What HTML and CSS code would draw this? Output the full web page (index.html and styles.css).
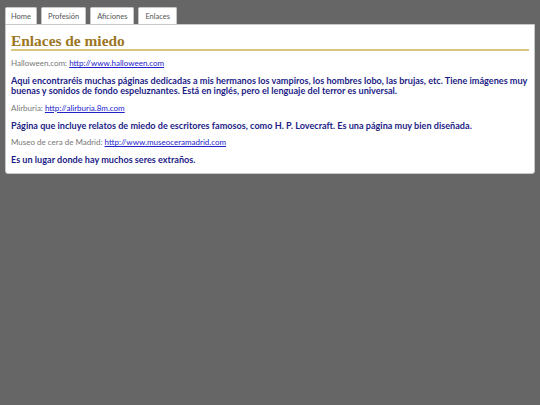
FILE: index.html
```html
<!DOCTYPE html>
<html lang="es">
<head>
<meta charset="utf-8">
<title>Enlaces de miedo</title>
<link rel="stylesheet" href="styles.css">
</head>
<body>
<div class="page">
  <ul class="tabs">
    <li class="tab">Home</li>
    <li class="tab">Profesión</li>
    <li class="tab">Aficiones</li>
    <li class="tab">Enlaces</li>
  </ul>
  <div class="box">
    <h1 class="title">Enlaces de miedo</h1>
    <p class="src">Halloween.com: <a href="#">http://www.halloween.com</a></p>
    <p class="desc">Aqui encontraréis muchas páginas dedicadas a mis hermanos los vampiros, los hombres lobo, las brujas, etc. Tiene imágenes muy buenas y sonidos de fondo espeluznantes. Está en inglés, pero el lenguaje del terror es universal.</p>
    <p class="src">Alirburia: <a href="#">http://alirburia.8m.com</a></p>
    <p class="desc">Página que incluye relatos de miedo de escritores famosos, como H. P. Lovecraft. Es una página muy bien diseñada.</p>
    <p class="src">Museo de cera de Madrid: <a href="#">http://www.museoceramadrid.com</a></p>
    <p class="desc">Es un lugar donde hay muchos seres extraños.</p>
  </div>
</div>
</body>
</html>
```

FILE: styles.css
```css
html, body {
  margin: 0;
  padding: 0;
  background: #666666;
}
body {
  font-family: Lato, "DejaVu Sans", sans-serif;
}
.page {
  padding: 7px 5px 0 5px;
}
.tabs {
  list-style: none;
  margin: 0;
  padding: 0;
  display: flex;
  gap: 4px;
}
.tab {
  background: #fff;
  border: 1px solid #c8c8c8;
  border-bottom: none;
  border-radius: 2px 2px 0 0;
  height: 16px;
  line-height: 17px;
  padding: 0 6px;
  font-size: 7.5px;
  color: #555;
}
.tab:first-child {
  padding: 0 5px;
}
.box {
  background: #fff;
  border: 1px solid #c8c8c8;
  border-radius: 0 0 3px 3px;
  padding: 8px 5px 8px 5px;
}
.title {
  font-family: "Liberation Serif", "DejaVu Serif", serif;
  font-size: 15.4px;
  font-weight: bold;
  color: #9c7623;
  margin: 0 0 7px 0;
  line-height: 16px;
  border-bottom: 2px solid #d8c582;
}
.src {
  font-size: 8px;
  line-height: 10px;
  color: #777;
  margin: 0 0 8px 0;
}
.src a {
  color: #2222cc;
}
.desc {
  font-size: 9.1px;
  font-weight: bold;
  color: #1c1c86;
  margin: 0 0 6.5px 0;
  line-height: 10px;
}
.desc:last-child {
  margin-bottom: 0;
}
```
